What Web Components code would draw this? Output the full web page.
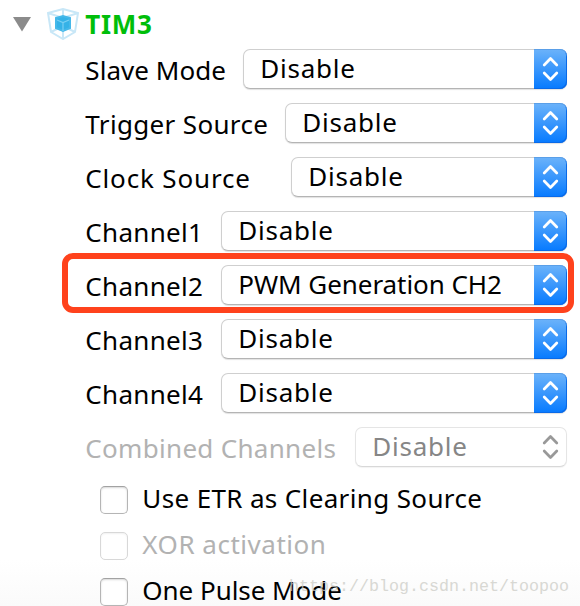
<!DOCTYPE html>
<html lang="en">
<head>
<meta charset="utf-8">
<title>TIM3</title>
<style>
  html, body { margin: 0; height: 606px; overflow: hidden; background: #fff; }
  body { font: 26px/36px "Noto Sans", "Open Sans", sans-serif; color: #000; }
</style>
</head>
<body>
<timer-panel name="TIM3">
  <mode-row label="Slave Mode" label-width="140" gap="17" value="Disable"></mode-row>
  <mode-row label="Trigger Source" label-width="182" gap="17" value="Disable"></mode-row>
  <mode-row label="Clock Source" label-width="164" gap="41" value="Disable"></mode-row>
  <mode-row label="Channel1" label-width="117" gap="18" value="Disable"></mode-row>
  <mode-row label="Channel2" label-width="117" gap="18" value="PWM Generation CH2" value-width="263" marked></mode-row>
  <mode-row label="Channel3" label-width="117" gap="18" value="Disable"></mode-row>
  <mode-row label="Channel4" label-width="117" gap="18" value="Disable"></mode-row>
  <mode-row label="Combined Channels" label-width="250" gap="19" value="Disable" disabled></mode-row>
  <check-row slot="options" label="Use ETR as Clearing Source" label-width="339"></check-row>
  <check-row slot="options" label="XOR activation" label-width="183" disabled></check-row>
  <check-row slot="options" label="One Pulse Mode" label-width="199"></check-row>
</timer-panel>
<script>
(function () {
  // text tracked out to the width given in its attribute
  class FitText extends HTMLElement {
    constructor() {
      super();
      const shadowRoot = this.attachShadow({ mode: 'open' });
      shadowRoot.innerHTML = `
        <style>
          :host { display: block; flex: none; }
          span { display: block; width: max-content; margin-left: -.7px; white-space: pre; }
        </style>
        <span></span>
      `;
    }

    connectedCallback() {
      const width = +this.getAttribute('width');
      const text = this.getAttribute('text');
      const span = this.shadowRoot.querySelector('span');
      span.textContent = text;
      const natural = span.getBoundingClientRect().width - 0.6;
      span.style.letterSpacing = `${(width - natural) / (text.length - 1)}px`;
      this.style.width = `${width}px`;
    }
  }

  class SelectBox extends HTMLElement {
    constructor() {
      super();
      this.attachShadow({ mode: 'open' });
    }

    connectedCallback() {
      const value = this.getAttribute('value');
      const width = this.getAttribute('value-width') || 94;
      this.shadowRoot.innerHTML = `
        <style>
          :host {
            display: flex; flex: 1; box-sizing: border-box; height: 40px;
            border: 1px solid #cfcfcf; border-bottom-color: #b4b4b4; border-radius: 7px;
            background: #fff; box-shadow: 0 1px 1px rgba(0, 0, 0, .12);
          }
          fit-text { margin: 0 auto 0 17px; }
          .arrows {
            display: flex; align-items: center; justify-content: center;
            width: 33px; height: 40px; margin: -1px -1px 0 0;
            border-radius: 0 7px 7px 0; box-sizing: border-box;
            background: linear-gradient(#6cb3fa, #067aff);
            box-shadow: inset 0 1px #5a9fe8, inset -1px -1px #0a6ae8;
            color: #fff;
          }
          :host([disabled]) { border-color: #e5e5e5; border-bottom-color: #d8d8d8; color: #868686; box-shadow: 0 1px 1px rgba(0, 0, 0, .05); }
          :host([disabled]) .arrows { background: none; box-shadow: none; color: #999; }
          svg { display: block; }
        </style>
        <fit-text text="${value}" width="${width}"></fit-text>
        <div class="arrows">
          <svg width="17" height="26" viewBox="0 0 17 26" fill="none" stroke="currentColor" stroke-width="2.7" stroke-linecap="round" stroke-linejoin="round">
            <path d="M2.2 9 8.5 2.5 14.8 9M2.2 17 8.5 23.5 14.8 17"/>
          </svg>
        </div>
      `;
    }
  }

  class ModeRow extends HTMLElement {
    constructor() {
      super();
      this.attachShadow({ mode: 'open' });
    }

    connectedCallback() {
      const disabled = this.hasAttribute('disabled') ? 'disabled' : '';
      this.shadowRoot.innerHTML = `
        <style>
          :host { display: flex; position: relative; align-items: center; height: 54px; padding: 0 13px 0 86px; }
          :host([disabled]) { color: #b2b2b2; }
          .label { margin: 2px ${this.getAttribute('gap')}px 0 0; }
          .mark { display: none; }
          :host([marked]) .mark {
            display: block; position: absolute; z-index: 1; left: 62px; top: -5px;
            width: 512px; height: 60px; box-sizing: border-box;
            border: 6px solid #ff421c; border-radius: 11px;
          }
        </style>
        <fit-text class="label" text="${this.getAttribute('label')}" width="${this.getAttribute('label-width')}"></fit-text>
        <select-box value="${this.getAttribute('value')}" value-width="${this.getAttribute('value-width') || ''}" ${disabled}></select-box>
        <div class="mark"></div>
      `;
    }
  }

  class CheckRow extends HTMLElement {
    constructor() {
      super();
      this.attachShadow({ mode: 'open' });
    }

    connectedCallback() {
      this.shadowRoot.innerHTML = `
        <style>
          :host { display: flex; align-items: center; height: 46px; padding-left: 100px; gap: 15px; }
          :host([disabled]) { color: #b2b2b2; }
          .box {
            width: 28px; height: 28px; box-sizing: border-box;
            border: 1px solid #b5b5b5; border-top-color: #a2a2a2; border-radius: 5px;
            background: #fff; box-shadow: inset 0 1px 2px rgba(0, 0, 0, .16);
          }
          fit-text { margin-bottom: 4px; }
          :host([disabled]) .box { border-color: #d8d8d8; box-shadow: inset 0 1px 2px rgba(0, 0, 0, .06); }
        </style>
        <div class="box"></div>
        <fit-text text="${this.getAttribute('label')}" width="${this.getAttribute('label-width')}"></fit-text>
      `;
    }
  }

  class TimerPanel extends HTMLElement {
    constructor() {
      super();
      this.attachShadow({ mode: 'open' });
    }

    connectedCallback() {
      this.shadowRoot.innerHTML = `
        <style>
          :host { display: block; position: relative; width: 580px; height: 606px; overflow: hidden; background: linear-gradient(#fff 560px, #fafafa); }
          header { display: flex; align-items: center; height: 42px; padding-left: 12px; color: #00be0a; font-weight: bold; }
          .toggle { margin: 5px 15px 0 0; }
          .cube { margin: 5px 7px 0 0; }
          header svg { display: block; flex: none; }
          header fit-text { margin-top: 6px; }
          .options { padding-top: 3px; }
          .watermark {
            position: absolute; left: 289px; top: 576px; opacity: .75;
            font: 16.67px/22px "Liberation Mono", monospace; color: #ccccc6; white-space: pre;
          }
        </style>
        <header>
          <svg class="toggle" width="20" height="16" viewBox="0 0 20 16"><path d="M1 1H19L10 15.5Z" fill="#8b8b8b"/></svg>
          <svg class="cube" width="32" height="32" viewBox="0 0 32 32" fill="none" stroke="#c8e7f7" stroke-width="2">
            <path d="M1 5 16 1 31 5 28 24 16 31 4 24ZM1 5 16 10 31 5M16 10V31M4 24 16 18 28 24M16 1V8"/>
            <path d="M9 10 16 8 23 10V20L16 23 9 20Z" fill="#35b2e7" stroke="#45b8e9"/>
            <path d="M10 12 16 14.5 22 12M16 14.5V23" stroke="#79cff3" stroke-width="1.2"/>
          </svg>
          <fit-text text="${this.getAttribute('name')}" width="66"></fit-text>
        </header>
        <slot></slot>
        <div class="options"><slot name="options"></slot></div>
        <div class="watermark">https://blog.csdn.net/toopoo</div>
      `;
    }
  }

  customElements.define('fit-text', FitText);
  customElements.define('select-box', SelectBox);
  customElements.define('mode-row', ModeRow);
  customElements.define('check-row', CheckRow);
  customElements.define('timer-panel', TimerPanel);
}());
</script>
</body>
</html>
